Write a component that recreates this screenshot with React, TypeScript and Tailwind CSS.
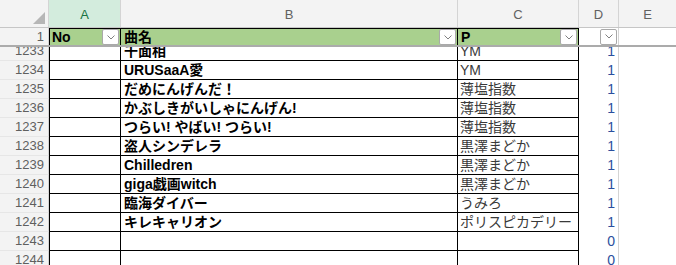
const rows: [number, string, string, number][] = [
  [1233, '千面相', 'YM', 1],
  [1234, 'URUSaaA愛', 'YM', 1],
  [1235, 'だめにんげんだ！', '薄塩指数', 1],
  [1236, 'かぶしきがいしゃにんげん!', '薄塩指数', 1],
  [1237, 'つらい! やばい! つらい!', '薄塩指数', 1],
  [1238, '盗人シンデレラ', '黒澤まどか', 1],
  [1239, 'Chilledren', '黒澤まどか', 1],
  [1240, 'giga戯画witch', '黒澤まどか', 1],
  [1241, '臨海ダイバー', 'うみろ', 1],
  [1242, 'キレキャリオン', 'ポリスピカデリー', 1],
  [1243, '', '', 0],
  [1244, '', '', 0],
]

const font = { fontFamily: '"Liberation Sans", "Noto Sans CJK JP", sans-serif' }

function Dropdown() {
  return (
    <div className="w-[17px] h-[16px] bg-white border border-[#a9a9a9] rounded-[2px] flex items-center justify-center shrink-0">
      <svg width="8" height="5" viewBox="0 0 8 5">
        <path d="M0.5 0.5 L4 4 L7.5 0.5" fill="none" stroke="#808080" strokeWidth="1" />
      </svg>
    </div>
  )
}

export default function App() {
  return (
    <div className="w-[676px] h-[265px] overflow-hidden bg-white flex flex-col" style={font}>
      {/* Column letters */}
      <div className="flex h-[28px] shrink-0 bg-[#f3f3f3] border-b border-[#c6c6c6] text-[13px] text-[#616161]">
        <div className="w-[49px] shrink-0 border-r border-[#d4d4d4] flex items-end justify-end pr-[3px] pb-[3px]">
          <div className="w-0 h-0 border-l-[12px] border-l-transparent border-b-[12px] border-b-[#b6b6b6]" />
        </div>
        <div className="w-[72px] shrink-0 bg-[#d3ecdd] border-r border-[#d4d4d4] flex items-end justify-center pb-[3px] text-[#1a7343]">A</div>
        <div className="w-[337px] shrink-0 border-r border-[#d4d4d4] flex items-end justify-center pb-[3px]">B</div>
        <div className="w-[121px] shrink-0 border-r border-[#d4d4d4] flex items-end justify-center pb-[3px]">C</div>
        <div className="w-[40px] shrink-0 border-r border-[#d4d4d4] flex items-end justify-center pb-[3px]">D</div>
        <div className="flex-1 flex items-end justify-center pb-[3px]">E</div>
      </div>

      {/* Header row 1 */}
      <div className="flex h-[17px] shrink-0">
        <div className="w-[49px] shrink-0 bg-[#f3f3f3] border-r border-[#d4d4d4] flex items-center justify-end pr-[4px] text-[13px] text-[#5f5f5f]">1</div>
        <div className="w-[72px] shrink-0 bg-[#a9d08e] border-t border-l border-r border-black flex items-center justify-between pl-[2px] pr-[1px] text-[14px] font-bold text-black">
          <span>No</span>
          <Dropdown />
        </div>
        <div className="w-[337px] shrink-0 bg-[#a9d08e] border-t border-r border-black flex items-center justify-between pl-[3px] pr-[1px] text-[14px] font-bold text-black">
          <span>曲名</span>
          <Dropdown />
        </div>
        <div className="w-[121px] shrink-0 bg-[#a9d08e] border-t border-r border-black flex items-center justify-between pl-[3px] pr-[1px] text-[14px] font-bold text-black">
          <span>P</span>
          <Dropdown />
        </div>
        <div className="w-[40px] shrink-0 border-r border-[#d4d4d4] flex items-center justify-end pr-[1px]">
          <Dropdown />
        </div>
        <div className="flex-1" />
      </div>

      {/* Frozen pane line */}
      <div className="h-[2px] shrink-0 bg-[#ababab]" />

      {/* Data rows */}
      <div className="flex-1 overflow-hidden">
        <div className="-mt-[5px]">
          {rows.map(([n, title, p, count]) => (
            <div key={n} className="flex h-[19px]">
              <div className="w-[49px] shrink-0 bg-[#f3f3f3] border-r border-b border-r-[#d4d4d4] border-b-[#e6e6e6] flex items-center justify-end pr-[4px] text-[13px] text-[#5f5f5f]">
                {n}
              </div>
              <div className="w-[72px] shrink-0 border-l border-r border-b border-black" />
              <div className="w-[337px] shrink-0 border-r border-b border-black flex items-center pl-[3px] overflow-hidden whitespace-nowrap text-[14px] font-bold text-black">
                {title}
              </div>
              <div className="w-[121px] shrink-0 border-r border-b border-black flex items-center pl-[2px] overflow-hidden whitespace-nowrap text-[14px] text-[#3a3a3a]">
                {p}
              </div>
              <div className="w-[40px] shrink-0 border-r border-[#d4d4d4] flex items-center justify-end pr-[3px] text-[14px] text-[#2a4f9e]">
                {count}
              </div>
              <div className="flex-1" />
            </div>
          ))}
        </div>
      </div>
    </div>
  )
}
